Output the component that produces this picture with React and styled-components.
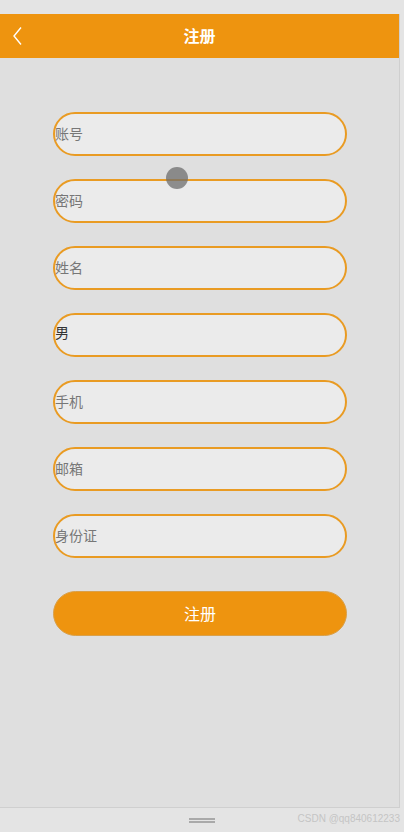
import styled, { createGlobalStyle } from "styled-components";

const Global = createGlobalStyle`
  html, body {
    margin: 0;
    padding: 0;
    background: #e3e3e3;
    font-family: "Noto Sans CJK SC", "Liberation Sans", sans-serif;
  }
`;

const Page = styled.div`
  width: 404px;
  height: 832px;
  display: flex;
  flex-direction: column;
  background: #e4e4e4;
  overflow: hidden;
  position: relative;
`;

const Frame = styled.div`
  margin-top: 14px;
  width: 400px;
  height: 794px;
  box-sizing: border-box;
  border-right: 1px solid #cfcfcf;
  border-bottom: 1px solid #cfcfcf;
  background: #dfdfdf;
  display: flex;
  flex-direction: column;
`;

const Header = styled.div`
  height: 44px;
  background: #ee940f;
  display: flex;
  align-items: center;
  justify-content: center;
  position: relative;
`;

const Back = styled.div`
  position: absolute;
  left: 11px;
  top: 12px;
  width: 14px;
  height: 20px;
`;

const Title = styled.div`
  color: #fff;
  font-size: 16px;
  font-weight: 700;
  line-height: 1;
  margin-bottom: 2px;
`;

const Form = styled.div`
  padding: 54px 0 0 53px;
  display: flex;
  flex-direction: column;
  gap: 23px;
`;

const Field = styled.div`
  width: 294px;
  height: 44px;
  box-sizing: border-box;
  border: 2px solid #e99b23;
  border-radius: 22px;
  background: #ebebeb;
  display: flex;
  align-items: ${(p) => (p.$value ? "flex-start" : "center")};
  padding-top: ${(p) => (p.$value ? "10px" : "0")};
  padding-bottom: ${(p) => (p.$value ? "0" : "2px")};
  font-size: 14px;
  line-height: 1;
  color: ${(p) => (p.$value ? "#333" : "#777")};
`;

const Submit = styled.div`
  margin-top: 10px;
  width: 294px;
  height: 45px;
  border-radius: 23px;
  background: #ee940f;
  border: 1px solid #d9a04a;
  box-sizing: border-box;
  display: flex;
  align-items: center;
  justify-content: center;
  padding-bottom: 2px;
  color: #fff;
  font-size: 16px;
  line-height: 1;
`;

const Touch = styled.div`
  position: absolute;
  left: 166px;
  top: 167px;
  width: 22px;
  height: 22px;
  border-radius: 50%;
  background: rgba(110, 110, 110, 0.75);
  filter: blur(0.6px);
`;

const Bottom = styled.div`
  flex: 1;
  display: flex;
  align-items: center;
  justify-content: center;
  position: relative;
`;

const Handle = styled.div`
  width: 26px;
  height: 5px;
  border-top: 2px solid #a9a9a9;
  border-bottom: 2px solid #a9a9a9;
  box-sizing: border-box;
`;

const Mark = styled.div`
  position: absolute;
  right: 4px;
  top: 5px;
  font-family: "Liberation Sans", sans-serif;
  font-size: 10px;
  color: #c4c4c4;
`;

const fields = ["账号", "密码", "姓名", "男", "手机", "邮箱", "身份证"];

export default function App() {
  return (
    <Page>
      <Global />
      <Frame>
        <Header>
          <Back>
            <svg width="14" height="20" viewBox="0 0 14 20">
              <path d="M10 1.5 L3 10 L10 18.5" fill="none" stroke="#fff" strokeWidth="1.4" />
            </svg>
          </Back>
          <Title>注册</Title>
        </Header>
        <Form>
          {fields.map((f) => (
            <Field key={f} $value={f === "男"}>{f}</Field>
          ))}
          <Submit>注册</Submit>
        </Form>
      </Frame>
      <Bottom>
        <Handle />
        <Mark>CSDN @qq840612233</Mark>
      </Bottom>
      <Touch />
    </Page>
  );
}
